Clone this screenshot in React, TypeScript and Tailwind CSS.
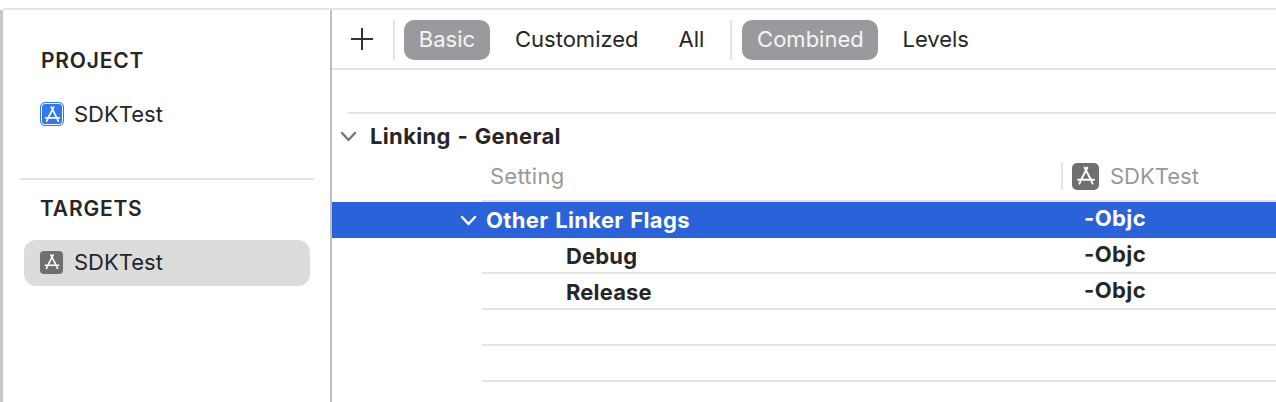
import React from 'react';

function AppGlyph({ className }: { className: string }) {
  return (
    <svg viewBox="0 0 24 24" className={className} fill="none" stroke="white" strokeLinecap="round" strokeWidth="1.9">
      <path d="M13.4 3.5 7 16M10.6 3.5 17 16" />
      <path d="M4 15.8h16" />
      <path d="M6.4 17.6 5.4 19.6M17.6 17.6l1 2" />
    </svg>
  );
}

function Chevron({ className, stroke }: { className: string; stroke: string }) {
  return (
    <svg viewBox="0 0 17 11" className={className} fill="none" stroke={stroke} strokeWidth="2.4" strokeLinecap="round" strokeLinejoin="round">
      <path d="M2 2l6.5 7L15 2" />
    </svg>
  );
}

function SubRow({ name, value }: { name?: string; value?: string }) {
  return (
    <div className="ml-[150px] h-[36px] border-b-2 border-[#e4e4e4] flex items-center text-[22px] font-bold text-[#262626]">
      <span className="ml-[84px] w-[518px] pt-[2px] tracking-[0.15px]">{name}</span>
      <span className="mb-[2px] tracking-[0.4px]">{value}</span>
    </div>
  );
}

export default function App() {
  return (
    <div className="w-[1276px] h-[402px] overflow-hidden bg-white flex flex-col font-['Inter',sans-serif] text-[#262626]">
      <div className="h-[10px] shrink-0 border-b-2 border-[#e4e4e4] ml-[3px]" />
      <div className="flex flex-1 min-h-0">
        <div className="w-[3px] shrink-0 bg-[#c8c6cc]" />
        <aside className="w-[329px] shrink-0 border-r-2 border-[#bfbfbf] pl-[17px] pr-[16px]">
          <div className="pl-[21px] pt-[38px] text-[21px] leading-[26px] font-semibold tracking-[0.8px]">PROJECT</div>
          <div className="flex items-center gap-[10px] pl-[20px] mt-[26px] h-[28px] text-[22px]">
            <span className="w-[24px] h-[24px] rounded-[5px] bg-[#3478f0] border border-[#3478f0] shadow-[inset_0_0_0_1px_white] flex items-center justify-center">
              <AppGlyph className="w-[21px] h-[21px]" />
            </span>
            SDKTest
          </div>
          <div className="mt-[50px] border-t-2 border-[#e4e4e4]" />
          <div className="pl-[20px] pt-[16px] text-[21px] leading-[26px] font-semibold tracking-[0.8px]">TARGETS</div>
          <div className="flex items-center gap-[11px] ml-[4px] pl-[16px] pb-[2px] mt-[18px] h-[46px] w-[286px] rounded-[12px] bg-[#dcdcdc] text-[22px]">
            <span className="w-[23px] h-[23px] rounded-[4px] bg-[#6f6f6f] flex items-center justify-center">
              <AppGlyph className="w-[20px] h-[20px]" />
            </span>
            SDKTest
          </div>
        </aside>
        <main className="flex-1 min-w-0">
          <div className="h-[60px] border-b-2 border-[#e4e4e4] flex items-center text-[22px]">
            <svg viewBox="0 0 22 22" className="ml-[19px] w-[22px] h-[22px]" stroke="#333" strokeWidth="2">
              <path d="M11 0v22M0 11h22" />
            </svg>
            <div className="ml-[20px] mt-[2px] w-[2px] h-[40px] bg-[#e4e4e4]" />
            <div className="ml-[9px] mt-[2px] pb-[2px] h-[40px] w-[86px] rounded-[10px] bg-[#9a9a9e] text-white/90 flex items-center justify-center">Basic</div>
            <div className="ml-[25px]">Customized</div>
            <div className="ml-[40px]">All</div>
            <div className="ml-[26px] mt-[2px] w-[2px] h-[40px] bg-[#e4e4e4]" />
            <div className="ml-[10px] mt-[2px] pb-[2px] h-[40px] w-[136px] rounded-[10px] bg-[#9a9a9e] text-white/90 flex items-center justify-center">Combined</div>
            <div className="ml-[24px]">Levels</div>
          </div>
          <div className="ml-[16px] mt-[42px] border-t-2 border-[#e4e4e4]" />
          <div className="h-[44px] flex items-center pt-[1px]">
            <Chevron className="ml-[8px] w-[17px] h-[11px]" stroke="#777" />
            <span className="ml-[13px] text-[22px] font-bold tracking-[0.35px] [word-spacing:1px]">Linking - General</span>
          </div>
          <div className="h-[42px] pb-[6px] flex items-center text-[22px] text-[#999]">
            <span className="ml-[158px] w-[571px] tracking-[0.25px]">Setting</span>
            <span className="w-[2px] h-[28px] bg-[#e4e4e4]" />
            <span className="ml-[9px] w-[27px] h-[27px] rounded-[5px] bg-[#6f6f6f] flex items-center justify-center">
              <AppGlyph className="w-[24px] h-[24px]" />
            </span>
            <span className="ml-[11px]">SDKTest</span>
          </div>
          <div className="ml-[150px] border-t-2 border-[#e4e4e4]" />
          <div className="h-[36px] bg-[#2962d9] flex items-center text-[22px] font-bold text-white">
            <Chevron className="ml-[128px] w-[17px] h-[11px]" stroke="white" />
            <span className="ml-[9px] w-[598px] tracking-[0.35px] [word-spacing:1px]">Other Linker Flags</span>
            <span className="mb-[4px] tracking-[0.4px]">-Objc</span>
          </div>
          <SubRow name="Debug" value="-Objc" />
          <SubRow name="Release" value="-Objc" />
          <SubRow />
          <SubRow />
        </main>
      </div>
    </div>
  );
}
